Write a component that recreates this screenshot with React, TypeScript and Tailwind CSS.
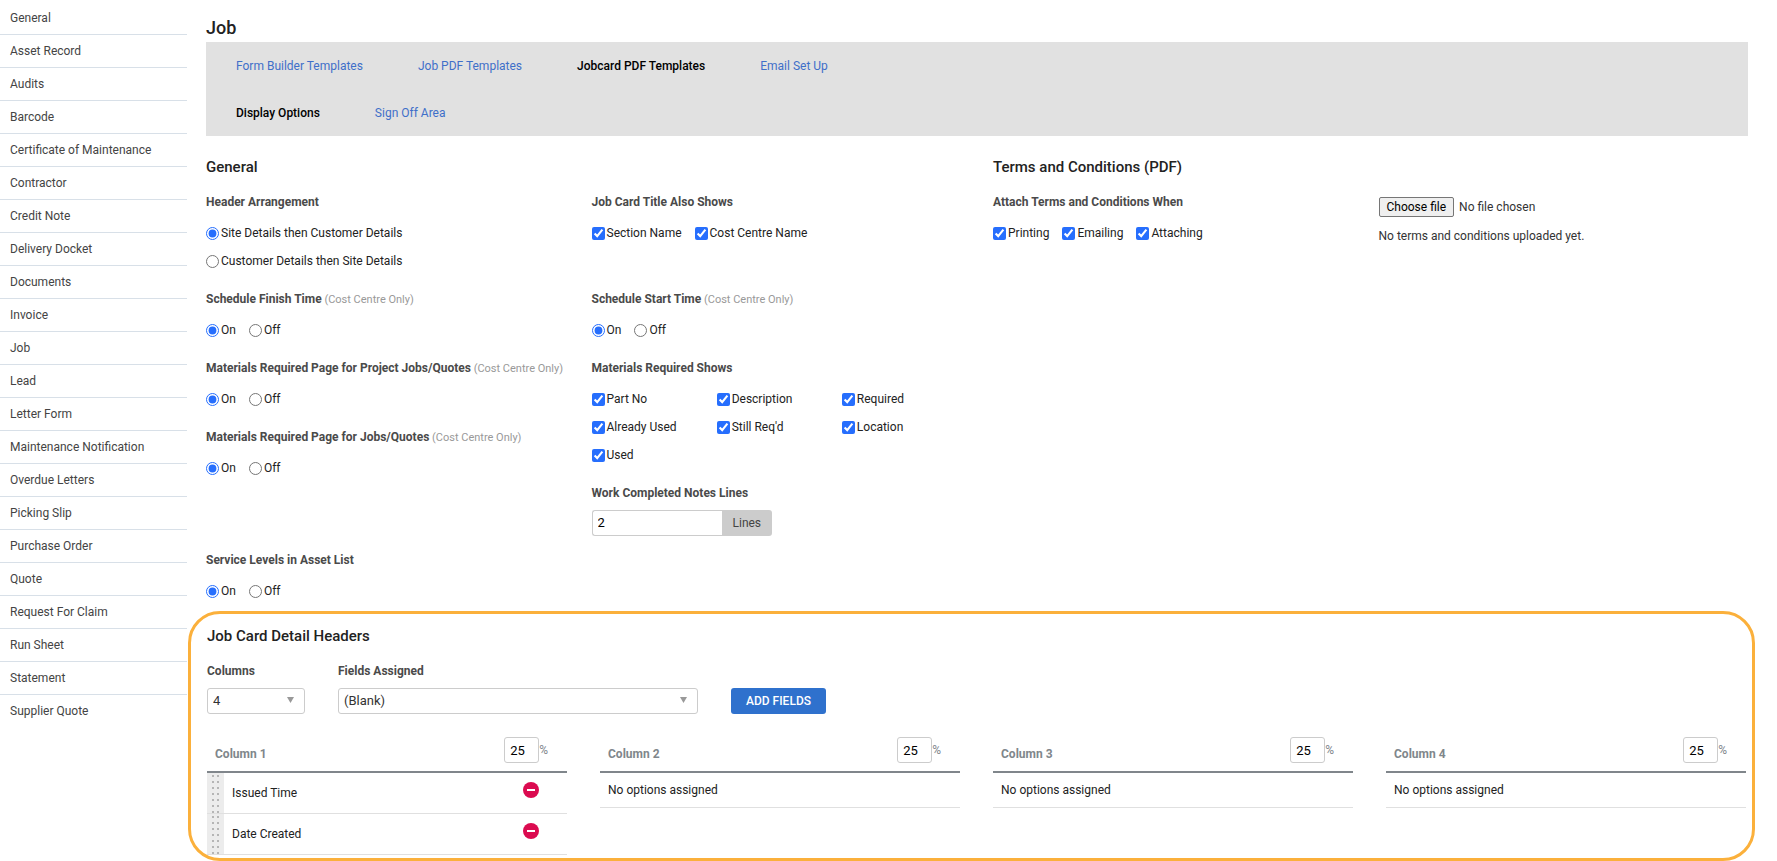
import { useState, type ReactNode } from 'react';

const MENU_ITEMS = [
  'General',
  'Asset Record',
  'Audits',
  'Barcode',
  'Certificate of Maintenance',
  'Contractor',
  'Credit Note',
  'Delivery Docket',
  'Documents',
  'Invoice',
  'Job',
  'Lead',
  'Letter Form',
  'Maintenance Notification',
  'Overdue Letters',
  'Picking Slip',
  'Purchase Order',
  'Quote',
  'Request For Claim',
  'Run Sheet',
  'Statement',
  'Supplier Quote',
];

const TABS = ['Form Builder Templates', 'Job PDF Templates', 'Jobcard PDF Templates', 'Email Set Up'];
const SUB_TABS = ['Display Options', 'Sign Off Area'];

const MATERIAL_FIELDS = ['Part No', 'Description', 'Required', 'Already Used', "Still Req'd", 'Location', 'Used'];

interface HeaderColumn {
  title: string;
  fields: string[];
}

const INITIAL_COLUMNS: HeaderColumn[] = [
  { title: 'Column 1', fields: ['Issued Time', 'Date Created'] },
  { title: 'Column 2', fields: [] },
  { title: 'Column 3', fields: [] },
  { title: 'Column 4', fields: [] },
];

function TabRow({ items, active }: { items: string[]; active: string }) {
  return (
    <nav className="flex h-[47px] items-center gap-[55px] px-[30px]">
      {items.map((item) => (
        <a
          key={item}
          href="#"
          aria-current={item === active ? 'page' : undefined}
          className={item === active ? 'font-medium text-black' : 'text-[#3f6fc9]'}
        >
          {item}
        </a>
      ))}
    </nav>
  );
}

function SectionTitle({ children }: { children: ReactNode }) {
  return <h2 className="text-[15px] leading-5 font-medium text-[#222]">{children}</h2>;
}

function Field({ label, hint, children }: { label: string; hint?: string; children: ReactNode }) {
  return (
    <fieldset>
      <legend className="mb-[15px] leading-4 font-bold text-[#4a4a4a]">
        {label}
        {hint && <span className="text-[11px] leading-none font-normal text-[#999]"> {hint}</span>}
      </legend>
      {children}
    </fieldset>
  );
}

function Choice({ type, name, label, checked }: { type: 'radio' | 'checkbox'; name: string; label: string; checked?: boolean }) {
  return (
    <label className="flex items-center gap-[2px] leading-4 text-[#222]">
      <input type={type} name={name} defaultChecked={checked} className="size-[13px] accent-[#266efd]" />
      {label}
    </label>
  );
}

function OnOff({ name }: { name: string }) {
  return (
    <div className="flex gap-[13px]">
      <Choice type="radio" name={name} label="On" checked />
      <Choice type="radio" name={name} label="Off" />
    </div>
  );
}

function SelectBox({ id, label, options, className }: { id: string; label: string; options: string[]; className: string }) {
  return (
    <div className={className}>
      <label htmlFor={id} className="block leading-4 font-bold text-[#4a4a4a]">
        {label}
      </label>
      <div className="relative mt-[9px]">
        <select
          id={id}
          className="h-[26px] w-full appearance-none rounded-[3px] border border-[#ccc] bg-white px-[5px] text-[13px] text-[#333]"
        >
          {options.map((option) => (
            <option key={option}>{option}</option>
          ))}
        </select>
        <svg viewBox="0 0 7 6" className="pointer-events-none absolute top-[9px] right-[11px] h-[6px] w-[7px] fill-[#999]">
          <path d="M0 0h7L3.5 6z" />
        </svg>
      </div>
    </div>
  );
}

function DragHandle() {
  return (
    <svg width="17" height="40" className="shrink-0 cursor-move">
      <defs>
        <pattern id="dots" width="5" height="6" patternUnits="userSpaceOnUse" x="5" y="2">
          <rect width="2" height="2" fill="#b5b5b5" />
        </pattern>
      </defs>
      <rect width="17" height="40" fill="#ececec" />
      <rect x="5" y="2" width="7" height="38" fill="url(#dots)" />
    </svg>
  );
}

function ColumnCard({ column, onRemove }: { column: HeaderColumn; onRemove: (field: string) => void }) {
  return (
    <section>
      <header className="flex h-9 justify-between border-b-2 border-[#80868b] pr-[19px] pl-2 text-[#80868b]">
        <h3 className="pt-[9px] leading-4 font-bold">{column.title}</h3>
        <label className="flex h-[26px] items-center">
          <input
            type="text"
            defaultValue="25"
            aria-label={`${column.title} width`}
            className="h-[26px] w-[35px] rounded-[3px] border border-[#ccc] bg-white px-[5px] text-[13px] text-black"
          />
          %
        </label>
      </header>
      {column.fields.length === 0 && (
        <p className="h-[35px] border-b border-[#e0e0e0] px-2 pt-[9px] leading-4 text-[#222]">No options assigned</p>
      )}
      <ul>
        {column.fields.map((field) => (
          <li key={field} className="flex h-[41px] items-center border-b border-[#e0e0e0] pr-7 text-[#222]">
            <DragHandle />
            <span className="ml-2 flex-1">{field}</span>
            <button type="button" aria-label={`Remove ${field}`} onClick={() => onRemove(field)} className="mb-[6px]">
              <svg viewBox="0 0 16 16" className="size-4">
                <circle cx="8" cy="8" r="8" fill="#db0b50" />
                <rect x="4" y="7" width="8" height="2" fill="#fff" />
              </svg>
            </button>
          </li>
        ))}
      </ul>
    </section>
  );
}

export default function App() {
  const [columns, setColumns] = useState(INITIAL_COLUMNS);

  const removeField = (title: string, field: string) => {
    setColumns(columns.map((c) => (c.title === title ? { ...c, fields: c.fields.filter((f) => f !== field) } : c)));
  };

  return (
    <div className="flex bg-white font-[Roboto,sans-serif] text-[12px] leading-4">
      {/* Settings menu */}
      <nav className="w-[188px] shrink-0 pt-[2px] pr-px">
        <ul>
          {MENU_ITEMS.map((item) => (
            <li key={item} className="h-[33px] border-b border-[#d8e0e8] last:border-b-0">
              <a href="#" className="block px-[10px] py-2 text-[#444]">
                {item}
              </a>
            </li>
          ))}
        </ul>
      </nav>

      <main className="min-w-0 flex-1 pr-[22px]">
        <div className="pr-[7px] pl-[18px]">
          <h1 className="pt-4 pb-[2px] text-[18px] leading-6 font-medium text-[#222]">Job</h1>
          <div className="bg-[#e1e1e1]">
            <TabRow items={TABS} active="Jobcard PDF Templates" />
            <TabRow items={SUB_TABS} active="Display Options" />
          </div>

          <div className="mt-[21px] grid grid-cols-2 gap-8">
            <section>
              <SectionTitle>General</SectionTitle>
              <div className="mt-[17px] grid grid-cols-2 gap-4">
                <Field label="Header Arrangement">
                  <div className="space-y-3">
                    <Choice type="radio" name="arrangement" label="Site Details then Customer Details" checked />
                    <Choice type="radio" name="arrangement" label="Customer Details then Site Details" />
                  </div>
                </Field>
                <Field label="Job Card Title Also Shows">
                  <div className="flex gap-[13px]">
                    <Choice type="checkbox" name="section" label="Section Name" checked />
                    <Choice type="checkbox" name="centre" label="Cost Centre Name" checked />
                  </div>
                </Field>
              </div>
              <div className="mt-[22px] grid grid-cols-2 gap-4">
                <div className="space-y-[22px]">
                  <Field label="Schedule Finish Time" hint="(Cost Centre Only)">
                    <OnOff name="finish" />
                  </Field>
                  <Field label="Materials Required Page for Project Jobs/Quotes" hint="(Cost Centre Only)">
                    <OnOff name="project-materials" />
                  </Field>
                  <Field label="Materials Required Page for Jobs/Quotes" hint="(Cost Centre Only)">
                    <OnOff name="job-materials" />
                  </Field>
                </div>
                <div className="space-y-[22px]">
                  <Field label="Schedule Start Time" hint="(Cost Centre Only)">
                    <OnOff name="start" />
                  </Field>
                  <Field label="Materials Required Shows">
                    <div className="grid grid-cols-3 gap-x-[6px] gap-y-3">
                      {MATERIAL_FIELDS.map((field) => (
                        <Choice key={field} type="checkbox" name={field} label={field} checked />
                      ))}
                    </div>
                  </Field>
                  <div>
                    <label htmlFor="notes-lines" className="block leading-4 font-bold text-[#4a4a4a]">
                      Work Completed Notes Lines
                    </label>
                    <div className="mt-[9px] flex h-[26px]">
                      <input
                        id="notes-lines"
                        type="text"
                        defaultValue="2"
                        className="w-[130px] rounded-l-[3px] border border-r-0 border-[#ccc] px-[5px] text-[13px] text-black"
                      />
                      <span className="rounded-r-[3px] bg-[#ccc] px-[11px] leading-[26px] text-[#444]">Lines</span>
                    </div>
                  </div>
                </div>
              </div>
              <div className="mt-4">
                <Field label="Service Levels in Asset List">
                  <OnOff name="service-levels" />
                </Field>
              </div>
            </section>

            <section>
              <SectionTitle>Terms and Conditions (PDF)</SectionTitle>
              <div className="mt-[17px] grid grid-cols-2 gap-4">
                <Field label="Attach Terms and Conditions When">
                  <div className="flex gap-[13px]">
                    <Choice type="checkbox" name="printing" label="Printing" checked />
                    <Choice type="checkbox" name="emailing" label="Emailing" checked />
                    <Choice type="checkbox" name="attaching" label="Attaching" checked />
                  </div>
                </Field>
                <div className="pt-[3px] text-[#333]">
                  <input id="terms-file" type="file" className="sr-only" />
                  <div className="flex items-center gap-[5px]">
                    <label
                      htmlFor="terms-file"
                      className="rounded-[2px] border border-[#767676] bg-[#efefef] px-[7px] py-px leading-4 text-black"
                    >
                      Choose file
                    </label>
                    <span>No file chosen</span>
                  </div>
                  <p className="mt-[11px]">No terms and conditions uploaded yet.</p>
                </div>
              </div>
            </section>
          </div>
        </div>

        {/* Job card detail headers */}
        <section className="mt-3 rounded-[32px] border-[3px] border-[#fbb03b] pt-3 pr-[6px] pb-[3px] pl-4">
          <SectionTitle>Job Card Detail Headers</SectionTitle>
          <div className="mt-[17px] flex items-end">
            <SelectBox id="columns" label="Columns" options={['4', '3', '2', '1']} className="w-[98px]" />
            <SelectBox id="fields" label="Fields Assigned" options={['(Blank)']} className="ml-[33px] w-[360px]" />
            <button type="button" className="ml-[33px] h-[26px] rounded-[3px] bg-[#2f71cd] px-[15px] font-medium text-white">
              ADD FIELDS
            </button>
          </div>
          <div className="mt-[23px] grid grid-cols-4 gap-[33px]">
            {columns.map((column) => (
              <ColumnCard key={column.title} column={column} onRemove={(field) => removeField(column.title, field)} />
            ))}
          </div>
        </section>
      </main>
    </div>
  );
}
